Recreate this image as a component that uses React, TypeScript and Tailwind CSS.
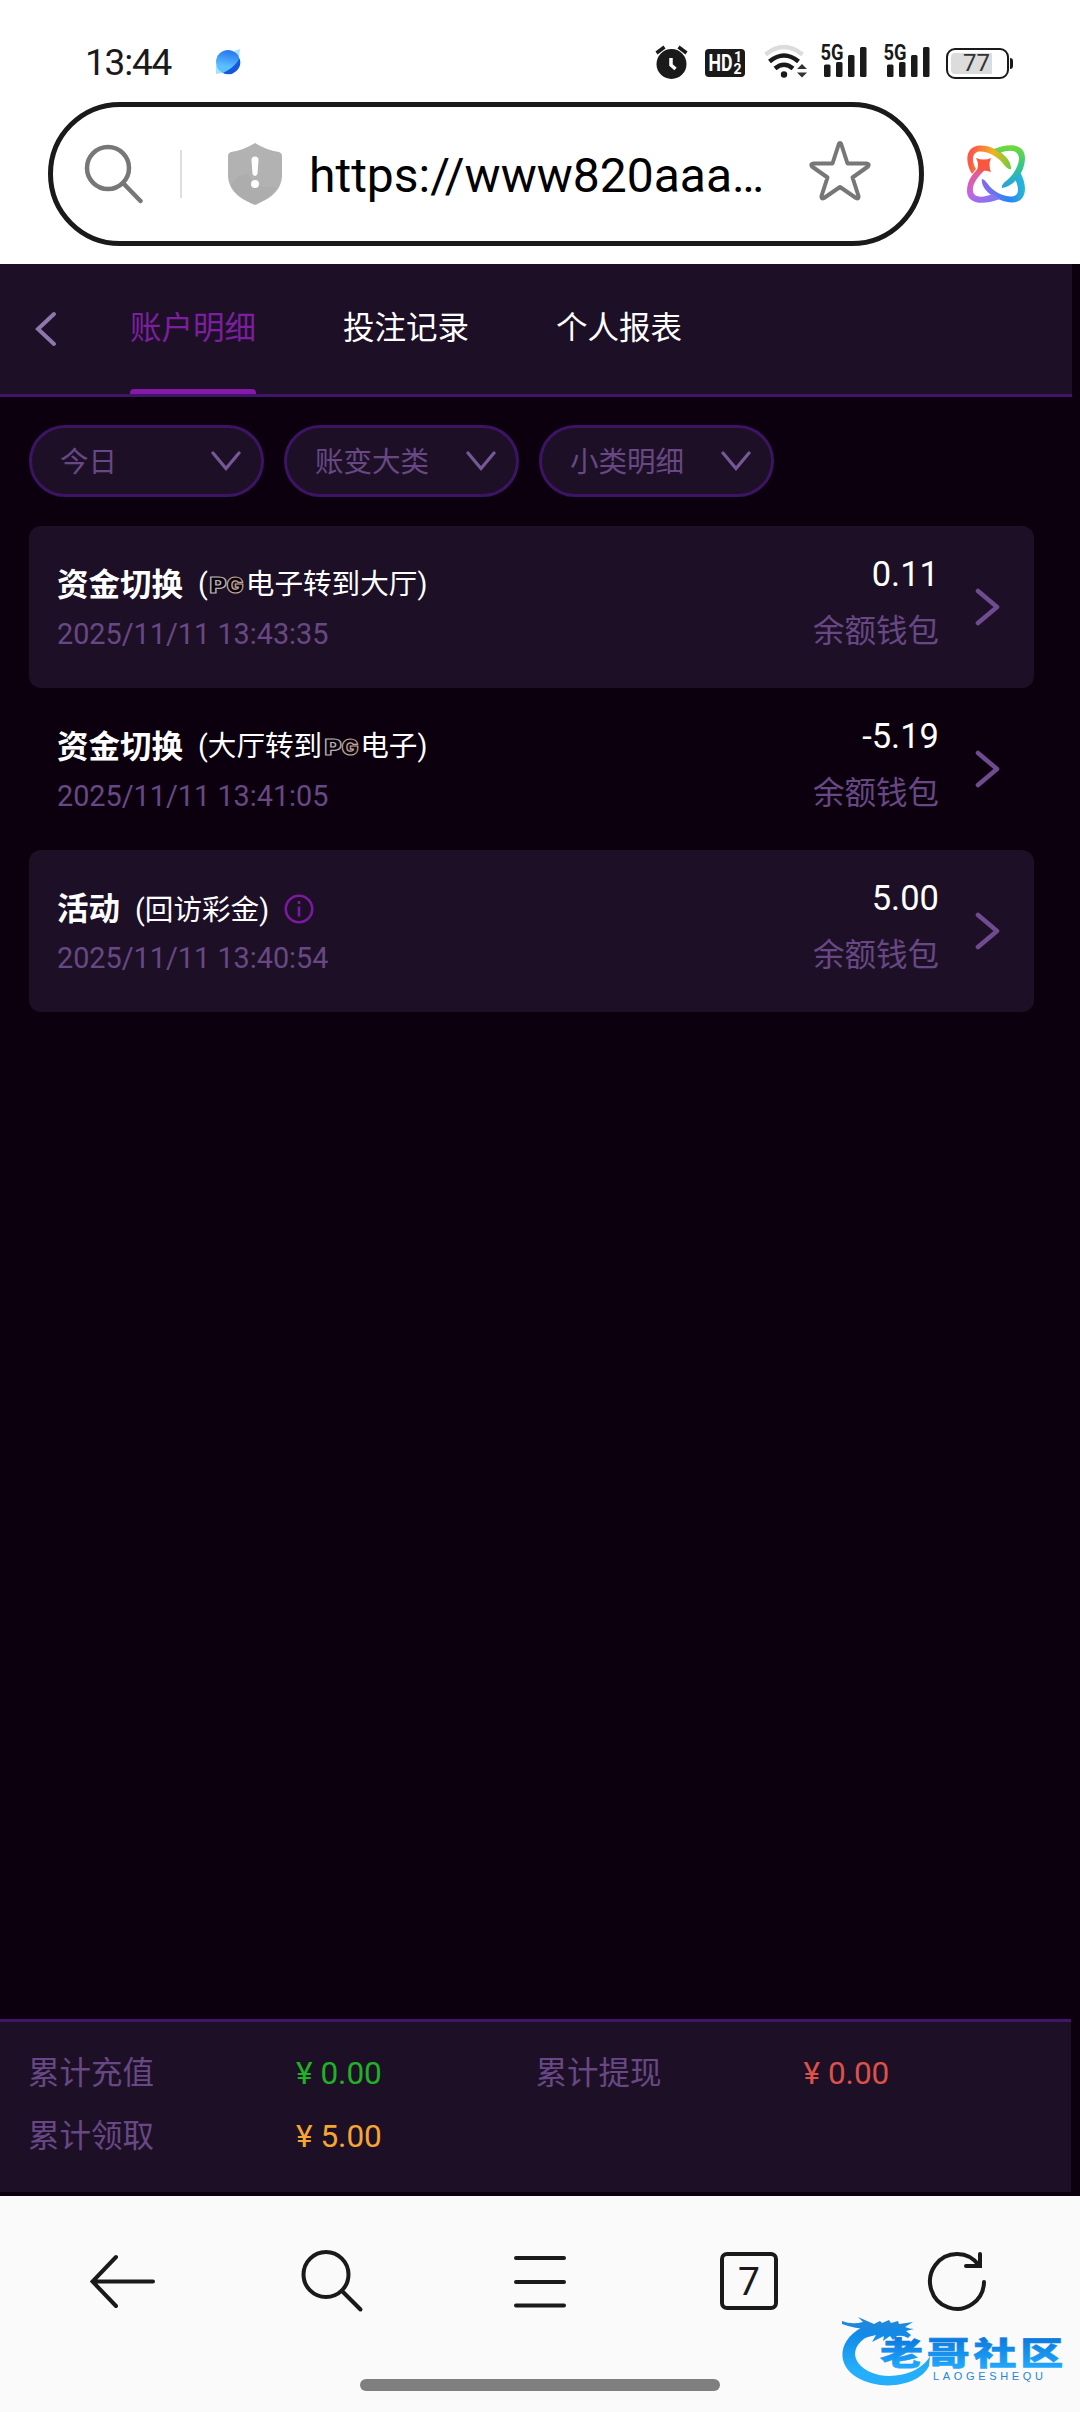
import type { ReactNode } from "react"

interface RecordItem {
  title: string
  detail: ReactNode
  time: string
  amount: string
  info?: boolean
}

function PgMark() {
  return (
    <svg width="35" height="24" viewBox="0 0 35 24" className="mx-[1.5px] mt-[2px] shrink-0 overflow-visible">
      <g
        fontFamily="Inter, sans-serif"
        fontWeight="900"
        fontSize="22"
        fill="#08020c"
        strokeWidth="1.2"
      >
        <text x="0.5" y="20" textLength="17" lengthAdjust="spacingAndGlyphs" stroke="#b9b3b4">P</text>
        <text x="17.5" y="20" textLength="17" lengthAdjust="spacingAndGlyphs" stroke="#c3a795">G</text>
      </g>
    </svg>
  )
}

const records: RecordItem[] = [
  {
    title: "资金切换",
    detail: <>(<PgMark />电子转到大厅)</>,
    time: "2025/11/11 13:43:35",
    amount: "0.11",
  },
  {
    title: "资金切换",
    detail: <>(大厅转到<PgMark />电子)</>,
    time: "2025/11/11 13:41:05",
    amount: "-5.19",
  },
  {
    title: "活动",
    detail: <>(回访彩金)</>,
    time: "2025/11/11 13:40:54",
    amount: "5.00",
    info: true,
  },
]

const filters = ["今日", "账变大类", "小类明细"]

const totals = [
  { label: "累计充值", value: "0.00", color: "text-[#1fb225]" },
  { label: "累计提现", value: "0.00", color: "text-[#dc5149]" },
  { label: "累计领取", value: "5.00", color: "text-[#f5a632]" },
]

function Signal() {
  return (
    <svg width="47" height="34" viewBox="0 0 47 34" fill="#1a1a1a" className="overflow-visible">
      <text x="-0.5" y="16" fontFamily="Roboto, sans-serif" fontWeight="700" fontSize="21.5" textLength="23" lengthAdjust="spacingAndGlyphs">5G</text>
      <rect x="3" y="20.5" width="6.5" height="12.5" rx="1.5" />
      <rect x="15" y="18" width="6.5" height="15" rx="1.5" />
      <rect x="27" y="11" width="6.5" height="22" rx="1.5" />
      <rect x="39" y="3" width="6.5" height="30" rx="1.5" />
    </svg>
  )
}

function StatusBar() {
  return (
    <div className="flex h-[102px] items-start pt-[44px]">
      <span className="ml-[85px] w-[89px] text-[37px] leading-[37px] tracking-[-1.2px] text-[#1a1a1a]">13:44</span>
      <svg width="28" height="28" viewBox="0 0 28 28" className="ml-[40px] mt-1">
        <defs>
          <linearGradient id="ball" x1="0.6" y1="0" x2="0.4" y2="1">
            <stop offset="0.1" stopColor="#2b7df2" />
            <stop offset="0.7" stopColor="#5cc0ff" />
          </linearGradient>
        </defs>
        <path d="M2 17 2 26 Q8 26 13 23ZM20 3 26 1 25 9Z" fill="#a5e2ff" />
        <circle cx="14" cy="14" r="12" fill="url(#ball)" />
        <path d="M25.6 10.5A12 12 0 0 1 9 25Q20 20 25.6 10.5Z" fill="#1558dd" />
      </svg>

      <div className="ml-[413px] flex">
        <svg width="33" height="36" viewBox="0 0 33 36" fill="none">
          <circle cx="16.5" cy="20" r="15" fill="#1a1a1a" />
          <path d="M1.5 9 9.5 3M31.5 9 23.5 3" stroke="#1a1a1a" strokeWidth="3.5" />
          <path d="M16 14v7l4.500 4" stroke="#fff" strokeWidth="3.5" />
        </svg>
        <svg width="40" height="34" viewBox="0 0 40 34" className="ml-[17px]">
          <rect x="0" y="5" width="40" height="28" rx="4" fill="#1a1a1a" />
          <g fill="#fff" fontFamily="Roboto, sans-serif" fontWeight="700">
            <text x="3.5" y="27" fontSize="23" textLength="24" lengthAdjust="spacingAndGlyphs">HD</text>
            <text x="29" y="18" fontSize="14">1</text>
            <text x="28.5" y="30" fontSize="14">2</text>
          </g>
        </svg>
        <svg width="44" height="36" viewBox="0 0 44 36" fill="none" className="ml-[19px]">
          <path d="M1.5 10.5Q20-4.500 38.5 10.5" stroke="#dcdcdc" strokeWidth="4.5" />
          <path d="M5.5 17.5Q20 5.500 34.5 17.5" stroke="#1a1a1a" strokeWidth="4.5" />
          <path d="M11 24.5Q20 17 29 24.5" stroke="#1a1a1a" strokeWidth="4.5" />
          <circle cx="20" cy="30.5" r="3.2" fill="#1a1a1a" />
          <path d="M33 25l5-5 5 5zM33 28.5l5 5 5-5z" fill="#333" />
        </svg>
        <div className="ml-[13px] flex gap-4">
          <Signal />
          <Signal />
        </div>
        <div className="ml-[15px] mt-[3px] flex items-center">
          <div className="flex h-[31px] w-[63px] rounded-[9px] border-2 border-[#1a1a1a] p-[3px]">
            <span className="w-[41px] rounded-l-[4px] bg-[#dcdcdc] pl-[12px] text-[24px] leading-[21px] text-[#333]">77</span>
          </div>
          <div className="ml-px h-[11px] w-[3px] rounded-r bg-[#1a1a1a]" />
        </div>
      </div>
    </div>
  )
}

function AddressBar() {
  return (
    <div className="flex h-[162px] items-start">
      <div className="ml-12 flex h-36 w-[876px] items-center rounded-full border-[5px] border-[#1a1a1a] bg-white">
        <svg width="60" height="60" viewBox="0 0 60 60" fill="none" stroke="#777" strokeWidth="4.5" strokeLinecap="round" className="ml-[31px]">
          <circle cx="24" cy="24" r="21" />
          <path d="M39.5 39.5 56.5 57" />
        </svg>
        <div className="ml-[36px] h-12 w-[2px] bg-[#dedede]" />
        <svg width="54" height="62" viewBox="0 0 54 62" className="ml-[46px]">
          <path d="M27 0Q38 7 51 9Q54 10 54 13V32C54 46 44 55 29 61Q27 62 25 61C10 55 0 46 0 32V13Q0 10 3 9Q16 7 27 0Z" fill="#b2b2b2" />
          <path d="M3 43Q8 31 20 31Q28 47 49 44Q43 54 29 61Q27 62 25 61Q11 55 3 43Z" fill="#adadad" />
          <path d="M23.5 17a3.5 3.5 0 0 1 7 0l-1 14q-2.5 4-5 0z" fill="#fff" />
          <circle cx="27" cy="41" r="4" fill="#fff" />
        </svg>
        <span className="ml-[27px] w-[460px] pt-[4px] text-[48px] leading-[60px] text-black">https://www820aaa…</span>
        <svg width="64" height="62" viewBox="0 0 64 62" fill="none" stroke="#777" strokeWidth="4" strokeLinejoin="round" className="mb-[6px] ml-[39px]">
          <path d="M32 3Q33 3 33.5 5L39.5 23.5H58.5Q62 24 60 26.5L44.5 37.5 50.5 56Q51 59.5 48 58L32 47 16 58Q13 59.5 13.5 56L19.5 37.5 4 26.5Q2 24 5.5 23.5H24.5L30.5 5Q31 3 32 3Z" />
        </svg>
      </div>
      <svg width="60" height="60" viewBox="0 0 60 60" fill="none" className="ml-[42px] mt-[42px]">
        <defs>
          <linearGradient id="knotA" x1="5" y1="15" x2="46" y2="22" gradientUnits="userSpaceOnUse">
            <stop offset="0" stopColor="#fa5a48" />
            <stop offset="0.5" stopColor="#f5b020" />
            <stop offset="1" stopColor="#5fd23e" />
          </linearGradient>
          <linearGradient id="knotB" x1="4" y1="18" x2="28" y2="58" gradientUnits="userSpaceOnUse">
            <stop offset="0" stopColor="#fb5648" />
            <stop offset="0.55" stopColor="#c862e0" />
            <stop offset="1" stopColor="#7a78f6" />
          </linearGradient>
          <linearGradient id="knotC" x1="42" y1="3" x2="42" y2="46" gradientUnits="userSpaceOnUse">
            <stop offset="0" stopColor="#6fd83c" />
            <stop offset="0.5" stopColor="#2fc690" />
            <stop offset="1" stopColor="#259df0" />
          </linearGradient>
          <linearGradient id="knotD" x1="54" y1="34" x2="16" y2="44" gradientUnits="userSpaceOnUse">
            <stop offset="0" stopColor="#25b5d8" />
            <stop offset="0.4" stopColor="#2a86f4" />
            <stop offset="1" stopColor="#9068ee" />
          </linearGradient>
        </defs>
        <path d="M6 30C-2 17 0 2 14 1.5C28 1 46 13 45 25Q43 26 39 22C33 13 22 7 13 7.5C5 8.5 6 19 10 25Z" fill="url(#knotA)" />
        <path d="M28 5C42-1 59-1 59 14C59 27 49 42 36 44Q35 41 40 37C48 31 53 21 53 14C52 5 42 6 34 9Z" fill="url(#knotC)" />
        <path d="M54 28C62 42 61 58 46 58.5C31 58 14 46 16 35Q18 35 21 39C27 48 38 53 46 52.5C54 52 53 43 49 35Z" fill="url(#knotD)" />
        <path d="M34 55C19 61 1 61 1 47C1 37 7 27 17 22L19 26C11 33 6 41 7 47C8 55 19 53 27 50Z" fill="url(#knotB)" />
        <path d="M10 14Q18 17 25 14Q22 21 25 28Q18 25 10 28Q14 21 10 14Z" fill="#f9573d" />
      </svg>
    </div>
  )
}

function PageHeader() {
  return (
    <header className="flex h-[133px] w-[1072px] border-b-[3px] border-[#41166a] bg-[#1d1026]">
      <svg width="24" height="38" viewBox="0 0 24 38" fill="none" stroke="#8f76ad" strokeWidth="4" strokeLinecap="round" className="ml-[34px] mt-[46px]">
        <path d="M20 4 4 19 20 34" />
      </svg>
      <nav className="ml-[72px] flex gap-[87px] text-[31.5px] text-white">
        <button className="flex flex-col justify-between text-[#7c1f9f]">
          <span className="leading-[129px]">账户明细</span>
          <span className="-mt-2 h-[5px] w-full rounded-t bg-[#8719aa]" />
        </button>
        <button className="flex leading-[129px]">投注记录</button>
        <button className="flex leading-[129px]">个人报表</button>
      </nav>
    </header>
  )
}

function FilterBar() {
  return (
    <div className="flex gap-5 px-[29px] pt-7">
      {filters.map((label) => (
        <button
          key={label}
          className="flex h-[72px] w-[235px] items-center justify-between rounded-full border-[3px] border-[#3c1463] bg-[#1d1026] pl-[28px] pr-5 text-[28.5px] text-[#684884]"
        >
          <span className="pt-[5px]">{label}</span>
          <svg width="30" height="22" viewBox="0 0 30 22" fill="none" stroke="#765896" strokeWidth="3.2" strokeLinecap="round">
            <path d="M2 3 15 18.5 28 3" />
          </svg>
        </button>
      ))}
    </div>
  )
}

function RecordRow({ item }: { item: RecordItem }) {
  return (
    <div className="flex h-[162px] w-[1005px] rounded-xl pl-[28px] pr-[29px] odd:bg-[#1d1026]">
      <div className="pt-[38px]">
        <div className="flex h-11 items-center">
          <span className="text-[31.5px] font-bold text-white">{item.title}</span>
          <span className={`ml-[15px] flex items-center text-[28.6px] text-white ${item.info ? "" : "mb-1"}`}>{item.detail}</span>
          {item.info && (
            <svg width="30" height="30" viewBox="0 0 30 30" fill="none" stroke="#7d18a0" strokeWidth="2.6" className="mb-[2px] ml-[15px]">
              <circle cx="15" cy="15" r="13.2" />
              <path d="M15 12.5v10M15 7v3" />
            </svg>
          )}
        </div>
        <div className="mt-[5px] text-[28.8px] leading-[42px] text-[#684884]">{item.time}</div>
      </div>
      <div className="ml-auto pt-[27px] text-right">
        <div className="text-[34.5px] leading-[42px] text-white">{item.amount}</div>
        <div className="mt-[15px] text-[31.5px] leading-[44px] text-[#684884]">余额钱包</div>
      </div>
      <svg width="26" height="40" viewBox="0 0 26 40" fill="none" stroke="#6f4c90" strokeWidth="4.5" strokeLinecap="round" strokeLinejoin="round" className="ml-9 mr-1 mt-[61px]">
        <path d="M3 4 22 20 3 36" />
      </svg>
    </div>
  )
}

function Totals() {
  return (
    <div className="mb-1 h-[173px] w-[1071px] border-t-[3px] border-[#41166a] bg-[#1d1026] px-[28px] pt-[20px]">
      <div className="grid grid-cols-2">
        {totals.map((total) => (
          <div key={total.label} className="flex h-[63px] items-center text-[31.5px] text-[#684884]">
            <span className="w-[268px] pt-px">{total.label}</span>
            <span className={total.color}>¥ {total.value}</span>
          </div>
        ))}
      </div>
    </div>
  )
}

function BrowserNav() {
  return (
    <footer className="relative h-[216px] bg-[#fafafa]">
      <div className="grid grid-cols-5 justify-items-center px-[19px] pt-[53px]">
        <svg width="66" height="66" viewBox="0 0 66 66" fill="none" stroke="#1a1a1a" strokeWidth="4" strokeLinecap="round">
          <path d="M26 8 2.5 32.5 26 57M3 32.5H63" />
        </svg>
        <svg width="66" height="66" viewBox="0 0 66 66" fill="none" stroke="#1a1a1a" strokeWidth="4" strokeLinecap="round">
          <circle cx="27" cy="25.5" r="22.5" />
          <path d="M43 42 61.5 60.5" />
        </svg>
        <svg width="66" height="66" viewBox="0 0 66 66" fill="none" stroke="#1a1a1a" strokeWidth="4" strokeLinecap="round">
          <path d="M9 9H57M9 33H57M9 56.5H57" />
        </svg>
        <div className="ml-px mt-[3px] flex h-[58px] w-[58px] items-center justify-center rounded-[7px] border-4 border-[#1a1a1a] pt-[3px] text-[39px] text-[#1a1a1a]">7</div>
        <svg width="66" height="66" viewBox="0 0 66 66" fill="none" stroke="#1a1a1a" strokeWidth="4" strokeLinecap="round" className="ml-px">
          <path d="M60 33A27 27.5 0 1 1 55 16.5M56 5V17H42" />
        </svg>
      </div>
      <div className="absolute left-[360px] top-[183px] h-3 w-[360px] rounded-full bg-[#7f7f7f]" />

      {/* community logo laid over the bar */}
      <svg width="230" height="82" viewBox="0 0 230 82" className="absolute left-[838px] top-[112px] overflow-visible">
        <defs>
          <linearGradient id="logo" x1="0" y1="5" x2="0" y2="75" gradientUnits="userSpaceOnUse">
            <stop offset="0" stopColor="#2d86cf" />
            <stop offset="0.3" stopColor="#128ae8" />
            <stop offset="0.8" stopColor="#25aefa" />
          </linearGradient>
          <linearGradient id="logoText" x1="0" y1="0" x2="0" y2="1">
            <stop offset="0.2" stopColor="#0b78dc" />
            <stop offset="0.85" stopColor="#20a8fb" />
          </linearGradient>
        </defs>
        <g fill="url(#logo)">
          <path d="M29 17C-2 30-2 58 20 70C45 84 82 77 91 58L92 48C85 62 62 71 41 67C9 59 9 32 42 24Z" />
          <path d="M4 13Q14 17 25 14L20 9Q29 13 36 16L42 13 44 15 51 12 53 15 60 13 61 16 75 14 67 19Q72 21 76 21L68 23 73 27 70 30Q65 27 59 28L55 32 52 28 45 33 46 28 34 34 38 27 26 30 32 21Q17 21 4 16Z" />
        </g>
        <text transform="translate(42 57) scale(1 .74)" fontFamily="'Noto Sans CJK SC', sans-serif" fontWeight="900" fontSize="43" letterSpacing="3.8" fill="url(#logoText)" stroke="url(#logoText)" strokeWidth="0.8">老哥社区</text>
        <text x="95" y="71.5" fontFamily="'Liberation Sans', sans-serif" fontSize="11" textLength="110" fill="#2585d8">LAOGESHEQU</text>
      </svg>
    </footer>
  )
}

export default function App() {
  return (
    <div className="flex h-[2412px] w-[1080px] flex-col overflow-hidden bg-white font-['Roboto','Noto_Sans_CJK_SC',sans-serif]">
      <StatusBar />
      <AddressBar />
      <main className="flex flex-1 flex-col bg-[#0c000f]">
        <PageHeader />
        <FilterBar />
        <div className="flex-1 px-[29px] pt-[29px]">
          {records.map((item) => (
            <RecordRow key={item.time} item={item} />
          ))}
        </div>
        <Totals />
      </main>
      <BrowserNav />
    </div>
  )
}
